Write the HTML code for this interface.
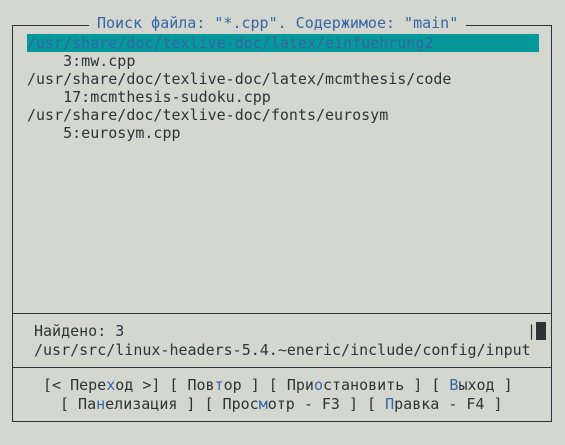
<!DOCTYPE html>
<html><head><meta charset="utf-8"><style>
body{margin:0;width:565px;height:445px;background:#d3d7cf;position:relative;overflow:hidden;font-family:"DejaVu Sans Mono","Liberation Mono",monospace;font-size:15px;color:#2e3436}
.l{position:absolute;background:#2e3436}
.t{position:absolute;white-space:pre;line-height:18px;height:18px}
.b{color:#3465a4}
</style></head><body>
<div class="l" style="left:12px;top:25px;width:1px;height:397px"></div>
<div class="l" style="left:551px;top:25px;width:1px;height:397px"></div>
<div class="l" style="left:12px;top:25px;width:540px;height:1px"></div>
<div class="l" style="left:12px;top:421px;width:540px;height:1px"></div>
<div class="l" style="left:12px;top:313px;width:540px;height:1px"></div>
<div class="l" style="left:12px;top:367px;width:540px;height:1px"></div>
<div class="t b" style="left:89px;top:14px;background:#d3d7cf;padding:0 8px">Поиск файла: "*.cpp". Содержимое: "main"</div>
<div style="position:absolute;left:27px;top:34px;width:512px;height:18px;background:#06989a"></div>
<div class="t b" style="left:27px;top:34px">/usr/share/doc/texlive-doc/latex/einfuehrung2</div>
<div class="t" style="left:27px;top:52px">    3:mw.cpp</div>
<div class="t" style="left:27px;top:70px">/usr/share/doc/texlive-doc/latex/mcmthesis/code</div>
<div class="t" style="left:27px;top:88px">    17:mcmthesis-sudoku.cpp</div>
<div class="t" style="left:27px;top:106px">/usr/share/doc/texlive-doc/fonts/eurosym</div>
<div class="t" style="left:27px;top:124px">    5:eurosym.cpp</div>
<div class="t" style="left:34px;top:322px">Найдено: 3</div>
<div class="t" style="left:527px;top:322px">|</div>
<div style="position:absolute;left:536px;top:322px;width:10px;height:18px;background:#2e3436"></div>
<div class="t" style="left:34px;top:341px">/usr/src/linux-headers-5.4.~eneric/include/config/input</div>
<div class="t" style="left:43px;top:376px">[&lt; Пере<span class="b">х</span>од &gt;] [ Пов<span class="b">т</span>ор ] [ При<span class="b">о</span>становить ] [ <span class="b">В</span>ыход ]</div>
<div class="t" style="left:60px;top:395px">[ Па<span class="b">н</span>елизация ] [ Прос<span class="b">м</span>отр - F3 ] [ <span class="b">П</span>равка - F4 ]</div>
</body></html>
